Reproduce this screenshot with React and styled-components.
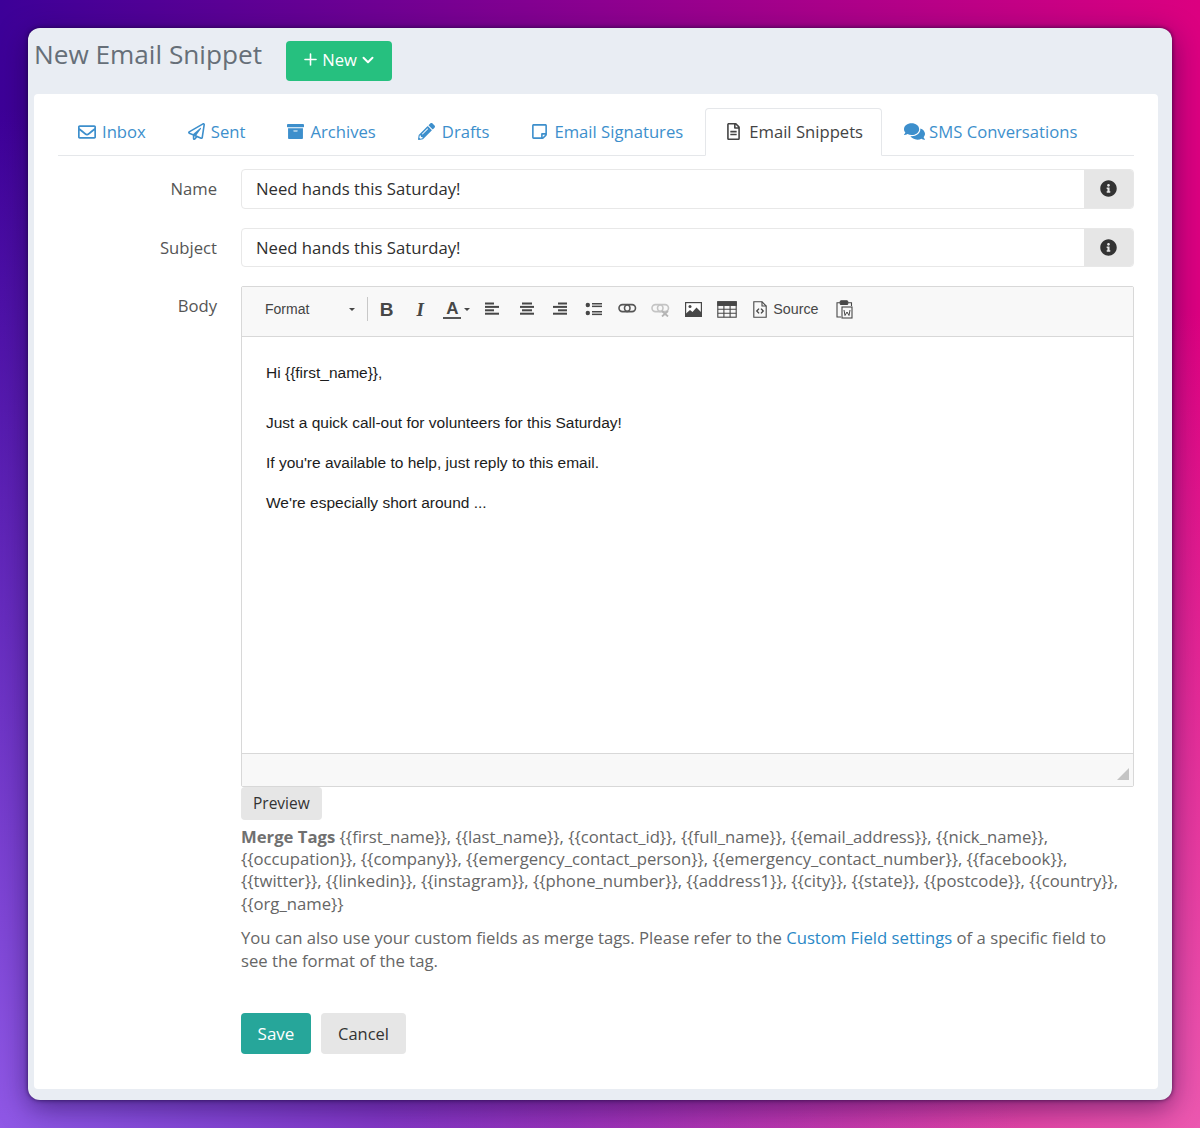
import React from "react";
import styled, { createGlobalStyle } from "styled-components";
import { Plus, ChevronDown } from "lucide-react";
import {
  FaRegEnvelope,
  FaRegPaperPlane,
  FaArchive,
  FaPencilAlt,
  FaRegStickyNote,
  FaRegFileAlt,
  FaComments,
  FaInfoCircle
} from "react-icons/fa";

const GlobalStyle = createGlobalStyle`
  html, body {
    margin: 0;
    padding: 0;
  }
  body {
    font-family: "Open Sans", "Liberation Sans", sans-serif;
  }
  * {
    box-sizing: border-box;
  }
`;

const Page = styled.div`
  width: 1200px;
  height: 1128px;
  padding: 28px;
  overflow: hidden;
  background:
    radial-gradient(circle at 0% 100%, #9058e6 0%, rgba(144, 88, 230, 0) 62%),
    radial-gradient(circle at 100% 100%, #ec58b0 0%, rgba(236, 88, 176, 0) 50%),
    linear-gradient(90deg, #3d0098 0%, #8c0090 50%, #dc0080 100%);
`;

const Window = styled.div`
  width: 1144px;
  height: 1072px;
  padding: 0 14px 11px 6px;
  display: flex;
  flex-direction: column;
  background: #e9edf3;
  border-radius: 12px;
  box-shadow:
    0 0 4px rgba(20, 0, 50, 0.7),
    0 8px 28px rgba(20, 0, 60, 0.5);
`;

const TitleBar = styled.div`
  height: 66px;
  display: flex;
  align-items: flex-start;
  gap: 24px;
`;

const Title = styled.h1`
  margin: 7px 0 0;
  font-size: 26.2px;
  line-height: 38px;
  font-weight: 400;
  color: #666f78;
`;

const NewButton = styled.button`
  width: 106px;
  height: 40px;
  margin-top: 13px;
  padding: 0 0 3px;
  display: flex;
  align-items: center;
  justify-content: center;
  gap: 2px;
  border: 0;
  border-radius: 4px;
  background: #26c07f;
  color: #fff;
  font: 500 16.6px "Open Sans", sans-serif;
`;

const Card = styled.div`
  flex: 1;
  padding: 14px 24px 0;
  background: #fff;
  border-radius: 4px;
`;

const Tabs = styled.div`
  height: 48px;
  display: flex;
  align-items: flex-start;
  gap: 2px;
  border-bottom: 1px solid #e5e7ea;
`;

const Tab = styled.div`
  height: ${(p) => (p.$active ? 48 : 47)}px;
  padding: 0 ${(p) => (p.$active ? 18 : 20)}px ${(p) => (p.$active ? 1 : 0)}px ${(p) => (p.$active ? 19 : 20)}px;
  display: flex;
  align-items: center;
  gap: ${(p) => p.$gap || 6}px;
  font-size: 16.67px;
  white-space: nowrap;
  color: ${(p) => (p.$active ? "#444" : "#3d8fcc")};
  background: #fff;
  ${(p) =>
    p.$active
      ? `
    border: 1px solid #e5e7ea;
    border-bottom-color: #fff;
    border-radius: 4px 4px 0 0;
  `
      : ""}
  svg {
    font-size: ${(p) => p.$icon || 17}px;
    flex: none;
  }
`;

const Row = styled.div`
  margin-top: ${(p) => p.$top}px;
  display: flex;
  align-items: flex-start;
`;

const Label = styled.label`
  width: 159px;
  margin-right: 24px;
  padding-top: 8px;
  text-align: right;
  font-size: 16.67px;
  line-height: 24px;
  color: #555;
`;

const InputGroup = styled.div`
  flex: 1;
  height: 39.5px;
  display: flex;
  border: 1px solid #e8e8e8;
  border-radius: 4px;
  overflow: hidden;
`;

const TextValue = styled.div`
  flex: 1;
  padding-left: 14px;
  font-size: 16.7px;
  line-height: 37.5px;
  color: #2e2e2e;
`;

const Addon = styled.div`
  width: 49px;
  display: flex;
  align-items: center;
  justify-content: center;
  background: #e6e6e6;
  color: #333;
  font-size: 17px;
`;

const FieldColumn = styled.div`
  flex: 1;
  min-width: 0;
`;

const Editor = styled.div`
  height: 501px;
  display: flex;
  flex-direction: column;
  border: 1px solid #d8d8d8;
  border-radius: 2px;
`;

const Toolbar = styled.div`
  height: 50px;
  flex: none;
  padding: 0 0 4px 23px;
  display: flex;
  align-items: center;
  background: #f8f8f8;
  border-bottom: 1px solid #d8d8d8;
  color: #474747;
  font-family: "Liberation Sans", Arial, sans-serif;
`;

const Combo = styled.div`
  width: 102px;
  padding-right: 12px;
  display: flex;
  align-items: center;
  justify-content: space-between;
  font-size: 14px;
  color: #444;
`;

const Caret = styled.span`
  width: 0;
  height: 0;
  border-left: 3px solid transparent;
  border-right: 3px solid transparent;
  border-top: 3px solid #474747;
`;

const Separator = styled.span`
  width: 1px;
  height: 24px;
  margin-right: 2px;
  background: #c8c8c8;
`;

const ToolButton = styled.span`
  width: ${(p) => p.$width || 33.4}px;
  height: 30px;
  flex: none;
  display: flex;
  align-items: center;
  justify-content: center;
  gap: ${(p) => p.$gap || 0}px;
  font-size: 14.3px;
  color: #474747;
`;

const BoldGlyph = styled.span`
  font: 700 19px/1 "Liberation Sans", sans-serif;
`;

const ItalicGlyph = styled.span`
  font: italic 700 19px/1 "Liberation Serif", serif;
`;

const ColorGlyph = styled.span`
  display: inline-block;
  width: 18px;
  text-align: center;
  font: 700 17px/17px "Liberation Sans", sans-serif;
  border-bottom: 2px solid #555;
`;

const EditArea = styled.div`
  flex: 1;
  padding: 26px 24px 0;
  font: 15.5px/20px "Liberation Sans", Arial, sans-serif;
  color: #1c1c1c;
  background: #fff;
`;

const Para = styled.p`
  margin: 0 0 ${(p) => p.$after || 20}px;
`;

const EditorFooter = styled.div`
  height: 33px;
  flex: none;
  display: flex;
  align-items: flex-end;
  justify-content: flex-end;
  padding: 0 4px 6px 0;
  background: #f8f8f8;
  border-top: 1px solid #d8d8d8;
`;

const GreyButton = styled.button`
  display: block;
  height: ${(p) => p.$height || 41}px;
  padding: 0 ${(p) => p.$pad || 17}px;
  border: 0;
  border-radius: 4px;
  background: #e6e6e6;
  color: #333;
  font: 400 ${(p) => p.$size || 16.5}px "Open Sans", sans-serif;
`;

const Help = styled.p`
  margin: ${(p) => p.$top}px 0 0;
  font-size: 16.7px;
  line-height: 22.4px;
  color: #666;
`;

const Tag = styled.b`
  font-weight: 700;
  color: #707070;
`;

const TextLink = styled.a`
  color: #2a88c6;
`;

const Actions = styled.div`
  margin-top: 41px;
  display: flex;
  gap: 10px;
`;

const SaveButton = styled.button`
  width: 70px;
  height: 41px;
  border: 0;
  border-radius: 4px;
  background: #26a69a;
  color: #fff;
  font: 400 17px "Open Sans", sans-serif;
`;

const AlignIcon = ({ lines }) => (
  <svg width="16" height="14" viewBox="0 0 16 14" fill="#474747">
    {lines.map(([x, w], i) => (
      <rect key={i} x={x} y={0.5 + i * 3.4} width={w} height="2" />
    ))}
  </svg>
);

const ListIcon = () => (
  <svg width="18" height="14" viewBox="0 0 18 14" fill="#474747">
    <circle cx="2.8" cy="3" r="2.2" />
    <circle cx="2.8" cy="11" r="2.2" />
    <rect x="7" y="1" width="10" height="1.5" />
    <rect x="7" y="3.6" width="10" height="1.5" />
    <rect x="7" y="9" width="10" height="1.5" />
    <rect x="7" y="11.6" width="10" height="1.5" />
  </svg>
);

const LinkIcon = ({ off }) => (
  <svg width="19" height="16" viewBox="0 0 19 16" fill="none" stroke={off ? "#c4c4c4" : "#555"} strokeWidth="1.6">
    <rect x="1" y="3.6" width="11" height="7" rx="3.5" />
    <rect x="6.5" y="3.6" width="11" height="7" rx="3.5" />
    {off && <path d="M11 10 L17 15.5 M17 10 L11 15.5" strokeWidth="1.8" stroke="#b4b4b4" />}
  </svg>
);

const ImageIcon = () => (
  <svg width="17" height="15" viewBox="0 0 17 15">
    <rect x="0.6" y="0.6" width="15.8" height="13.8" fill="#fff" stroke="#474747" strokeWidth="1.2" />
    <circle cx="5" cy="4.6" r="1.5" fill="#474747" />
    <path d="M1 14 L1 11.5 L5 8 L7.5 10 L11.5 5.5 L16 10 L16 14 Z" fill="#474747" />
  </svg>
);

const TableIcon = () => (
  <svg width="20" height="17" viewBox="0 0 20 17" fill="none" stroke="#474747" strokeWidth="1.1">
    <rect x="0.8" y="0.8" width="18.4" height="15.4" />
    <rect x="0.8" y="0.8" width="18.4" height="3.6" fill="#474747" />
    <path d="M0.8 8.2 H19.2 M0.8 12.2 H19.2 M6.9 4.4 V16.2 M13.1 4.4 V16.2" />
  </svg>
);

const SourceIcon = () => (
  <svg width="14" height="17" viewBox="0 0 14 17" fill="none" stroke="#474747" strokeWidth="1.1">
    <path d="M0.8 0.8 H9 L13.2 5 V16.2 H0.8 Z" />
    <path d="M9 0.8 V5 H13.2" />
    <path d="M6 7.6 L3.8 10 L6 12.4 M8 7.6 L10.2 10 L8 12.4" strokeWidth="1.4" />
  </svg>
);

const PasteIcon = () => (
  <svg width="17" height="19" viewBox="0 0 17 19" fill="none" stroke="#474747" strokeWidth="1.1">
    <path d="M4 2.8 H1 V17 H5 M12 2.8 H15.5 V6" />
    <rect x="4.2" y="0.8" width="7.6" height="3.6" rx="1" fill="#474747" />
    <rect x="6" y="7" width="10" height="11" fill="#f8f8f8" />
    <path d="M8 10 L9 15.5 L11 12 L13 15.5 L14 10" strokeWidth="1" />
  </svg>
);

const Resizer = () => (
  <svg width="12" height="12" viewBox="0 0 12 12">
    <path d="M12 0 V12 H0 Z" fill="#c4c4c4" />
  </svg>
);

const tabs = [
  { icon: <FaRegEnvelope />, label: "Inbox", size: 18 },
  { icon: <FaRegPaperPlane />, label: "Sent" },
  { icon: <FaArchive />, label: "Archives" },
  { icon: <FaPencilAlt />, label: "Drafts", gap: 7 },
  { icon: <FaRegStickyNote />, label: "Email Signatures" },
  { icon: <FaRegFileAlt />, label: "Email Snippets", active: true, gap: 7 },
  { icon: <FaComments />, label: "SMS Conversations", gap: 4, size: 21 }
];

export default function App() {
  return (
    <Page>
      <GlobalStyle />
      <Window>
        <TitleBar>
          <Title>New Email Snippet</Title>
          <NewButton>
            <Plus size={19} strokeWidth={2} />
            New
            <ChevronDown size={18} strokeWidth={2.6} />
          </NewButton>
        </TitleBar>
        <Card>
          <Tabs>
            {tabs.map((t) => (
              <Tab key={t.label} $active={t.active} $gap={t.gap} $icon={t.size}>
                {t.icon}
                {t.label}
              </Tab>
            ))}
          </Tabs>
          <Row $top={13}>
            <Label>Name</Label>
            <InputGroup>
              <TextValue>Need hands this Saturday!</TextValue>
              <Addon>
                <FaInfoCircle />
              </Addon>
            </InputGroup>
          </Row>
          <Row $top={19}>
            <Label>Subject</Label>
            <InputGroup>
              <TextValue>Need hands this Saturday!</TextValue>
              <Addon>
                <FaInfoCircle />
              </Addon>
            </InputGroup>
          </Row>
          <Row $top={18.5}>
            <Label>Body</Label>
            <FieldColumn>
              <Editor>
                <Toolbar>
                  <Combo>
                    Format
                    <Caret />
                  </Combo>
                  <Separator />
                  <ToolButton>
                    <BoldGlyph>B</BoldGlyph>
                  </ToolButton>
                  <ToolButton>
                    <ItalicGlyph>I</ItalicGlyph>
                  </ToolButton>
                  <ToolButton $width={40} $gap={3}>
                    <ColorGlyph>A</ColorGlyph>
                    <Caret />
                  </ToolButton>
                  <ToolButton>
                    <AlignIcon lines={[[0, 9], [0, 14], [0, 9], [0, 14]]} />
                  </ToolButton>
                  <ToolButton>
                    <AlignIcon lines={[[3, 10], [1, 14], [3, 10], [1, 14]]} />
                  </ToolButton>
                  <ToolButton>
                    <AlignIcon lines={[[6, 9], [1, 14], [6, 9], [1, 14]]} />
                  </ToolButton>
                  <ToolButton>
                    <ListIcon />
                  </ToolButton>
                  <ToolButton>
                    <LinkIcon />
                  </ToolButton>
                  <ToolButton>
                    <LinkIcon off />
                  </ToolButton>
                  <ToolButton>
                    <ImageIcon />
                  </ToolButton>
                  <ToolButton>
                    <TableIcon />
                  </ToolButton>
                  <ToolButton $width={84} $gap={6}>
                    <SourceIcon />
                    Source
                  </ToolButton>
                  <ToolButton>
                    <PasteIcon />
                  </ToolButton>
                </Toolbar>
                <EditArea>
                  <Para $after={30}>Hi {"{{first_name}}"},</Para>
                  <Para>Just a quick call-out for volunteers for this Saturday!</Para>
                  <Para>If you're available to help, just reply to this email.</Para>
                  <Para $after={1}>We're especially short around ...</Para>
                </EditArea>
                <EditorFooter>
                  <Resizer />
                </EditorFooter>
              </Editor>
              <GreyButton $height={33} $pad={12} $size={15.5}>
                Preview
              </GreyButton>
              <Help $top={6}>
                <Tag>Merge Tags</Tag> {"{{first_name}}, {{last_name}}, {{contact_id}}, {{full_name}}, {{email_address}}, {{nick_name}}, {{occupation}}, {{company}}, {{emergency_contact_person}}, {{emergency_contact_number}}, {{facebook}}, {{twitter}}, {{linkedin}}, {{instagram}}, {{phone_number}}, {{address1}}, {{city}}, {{state}}, {{postcode}}, {{country}}, {{org_name}}"}
              </Help>
              <Help $top={12}>
                You can also use your custom fields as merge tags. Please refer to the{" "}
                <TextLink>Custom Field settings</TextLink> of a specific field to see the format of the tag.
              </Help>
              <Actions>
                <SaveButton>Save</SaveButton>
                <GreyButton>Cancel</GreyButton>
              </Actions>
            </FieldColumn>
          </Row>
        </Card>
      </Window>
    </Page>
  );
}
